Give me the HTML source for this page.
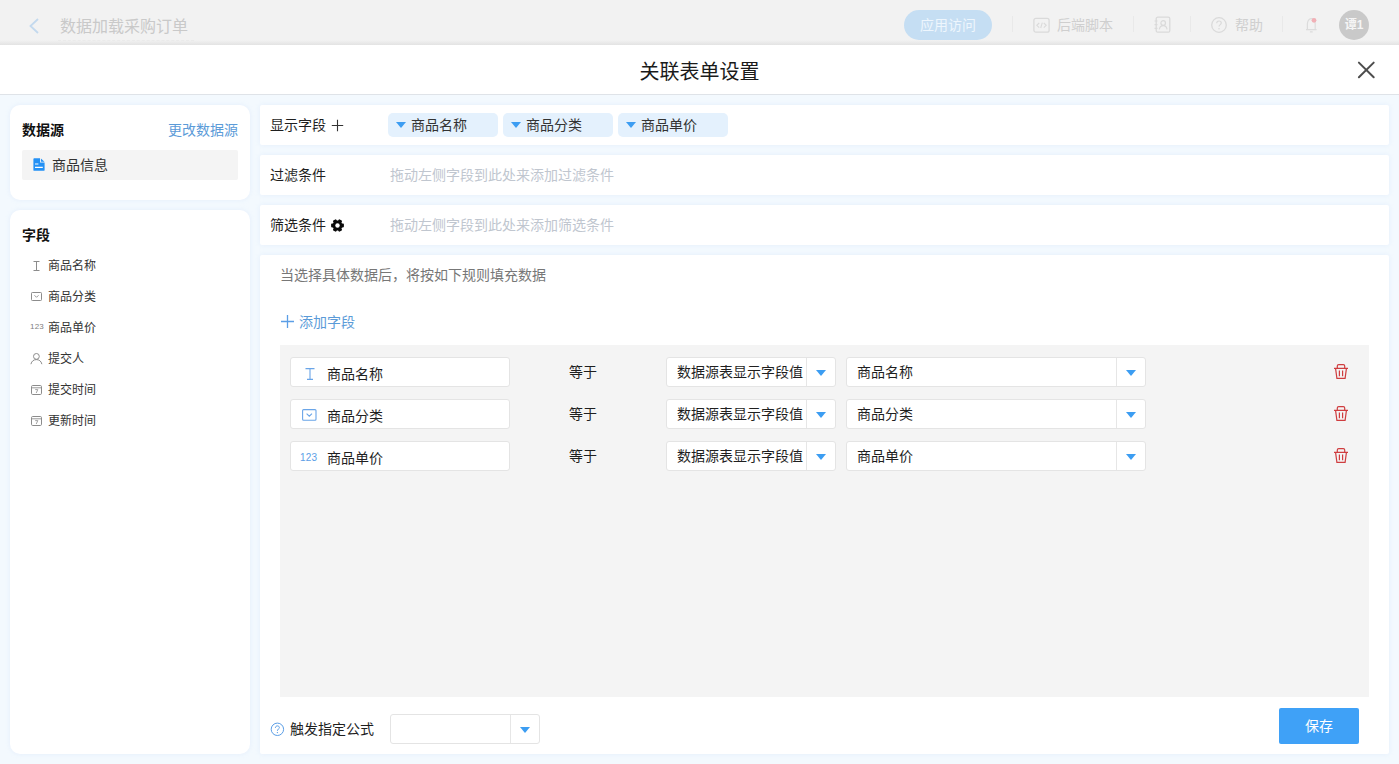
<!DOCTYPE html>
<html lang="zh-CN">
<head>
<meta charset="utf-8">
<title>关联表单设置</title>
<style>
*{box-sizing:border-box;margin:0;padding:0}
html,body{width:1399px;height:764px;overflow:hidden}
body{position:relative;background:#f3f9fe;font-family:"Liberation Sans","Noto Sans CJK SC",sans-serif;font-size:14px;color:#1f1f1f}
.abs{position:absolute}
.topbar{left:0;top:0;width:1399px;height:45px;background:linear-gradient(#f2f2f2 0,#f2f2f2 40px,#e3e3e3 45px)}
.topbar .t{position:absolute;white-space:nowrap}
.topbar .vs{top:16px;width:1px;height:16px;background:#e9e9e9}
.hdr{left:0;top:45px;width:1399px;height:50px;background:#fff;border-bottom:1px solid #dfe3e8}
.hdr .title{position:absolute;left:0;width:1399px;top:13px;text-align:center;font-size:20px;line-height:28px;color:#1a1a1a}
.panel{background:#fff;border-radius:10px;box-shadow:0 0 5px rgba(190,212,243,.28)}
.row{background:#fff;border-radius:2px;left:260px;width:1129px;height:40px;box-shadow:0 0 5px rgba(190,212,243,.28)}
.row .lab{position:absolute;left:10px;top:0;line-height:40px;white-space:nowrap;color:#1f1f1f}
.row .ph{position:absolute;left:130px;top:0;line-height:40px;color:#c0c6cf;white-space:nowrap}
.tag{position:absolute;top:8px;width:110px;height:24px;border-radius:5px;background:#e4f1fd;line-height:24px;padding-left:23px;color:#333;white-space:nowrap}
.tag:before{content:"";position:absolute;left:8px;top:9px;border:5px solid transparent;border-top:6px solid #3c9df2;border-bottom:0}
.fld{position:absolute;left:38px;font-size:12px;line-height:18px;color:#333;white-space:nowrap}
.inp{position:absolute;height:30px;background:#fff;border:1px solid #e4e4e4;border-radius:3px;line-height:28px;white-space:nowrap;color:#1f1f1f}
.caret{position:absolute;width:0;height:0;border:5px solid transparent;border-top:6px solid #3c9df2;border-bottom:0}
.sep{position:absolute;top:0;width:1px;height:28px;background:#e6e6e6}
.eq{position:absolute;left:569px;line-height:20px;color:#1f1f1f}
</style>
</head>
<body>
<!-- top bar (dimmed) -->
<div class="abs topbar">
  <svg class="abs" style="left:26px;top:17px" width="16" height="18" viewBox="0 0 16 18"><path d="M12 2 L4.5 9 L12 16" fill="none" stroke="#c3d9ee" stroke-width="1.8"/></svg>
  <div class="t" style="left:58px;top:15px;font-size:16px;line-height:24px;color:#c9c9c9;padding:0 6px 1px 2px;border-bottom:1px dashed #eaeaea">数据加载采购订单</div>
  <div class="t" style="left:904px;top:10px;width:88px;height:30px;border-radius:15px;background:#c5def3;color:#eef6fd;font-size:14px;line-height:30px;text-align:center">应用访问</div>
  <div class="t vs" style="left:1012px"></div>
  <svg class="abs" style="left:1033px;top:17px" width="17" height="17" viewBox="0 0 17 17"><rect x="0.9" y="1.4" width="15.2" height="13.8" rx="2" fill="none" stroke="#dadada" stroke-width="1.3"/><path d="M6.2 6 L3.8 8.3 L6.2 10.6 M10.8 6 L13.2 8.3 L10.8 10.6 M9.3 5.6 L7.7 11" fill="none" stroke="#dadada" stroke-width="1.1"/></svg>
  <div class="t" style="left:1057px;top:15px;font-size:14px;line-height:20px;color:#cfcfcf">后端脚本</div>
  <div class="t vs" style="left:1133px"></div>
  <svg class="abs" style="left:1153px;top:16px" width="19" height="18" viewBox="0 0 19 18"><rect x="3.2" y="1.2" width="13.6" height="15" rx="1.5" fill="none" stroke="#dadada" stroke-width="1.3"/><path d="M1.5 5 H4.5 M1.5 8.7 H4.5 M1.5 12.4 H4.5" stroke="#dadada" stroke-width="1.2"/><circle cx="10.2" cy="7" r="2.3" fill="none" stroke="#dadada" stroke-width="1.2"/><path d="M6.3 13.4 C6.8 10.6 8.4 9.6 10.2 9.6 C12 9.6 13.6 10.6 14.1 13.4" fill="none" stroke="#dadada" stroke-width="1.2"/></svg>
  <div class="t vs" style="left:1190px"></div>
  <svg class="abs" style="left:1210px;top:16px" width="18" height="18" viewBox="0 0 18 18"><circle cx="9" cy="9" r="7.3" fill="none" stroke="#dadada" stroke-width="1.3"/><path d="M6.7 7.3 C6.7 5.7 7.8 5 9 5 C10.3 5 11.3 5.8 11.3 7 C11.3 8.6 9 8.7 9 10.6" fill="none" stroke="#dadada" stroke-width="1.2"/><circle cx="9" cy="12.7" r="0.8" fill="#dadada"/></svg>
  <div class="t" style="left:1235px;top:15px;font-size:14px;line-height:20px;color:#cfcfcf">帮助</div>
  <div class="t vs" style="left:1282px"></div>
  <svg class="abs" style="left:1303px;top:16px" width="18" height="18" viewBox="0 0 18 18"><path d="M3 13.6 H13.6 M4.4 13.4 V8 C4.4 4.6 6.2 2.6 8.3 2.6 C10.4 2.6 12.2 4.6 12.2 8 V13.4 M6.9 15.8 H9.7" fill="none" stroke="#dcdcdc" stroke-width="1.2"/><circle cx="11" cy="4.3" r="2.4" fill="#f1b0b6"/></svg>
  <div class="t" style="left:1339px;top:10px;width:30px;height:30px;border-radius:15px;background:#c9c9c9;color:#f5f5f5;font-size:12px;font-weight:bold;line-height:30px;text-align:center">谭1</div>
</div>

<!-- modal header -->
<div class="abs hdr">
  <div class="title">关联表单设置</div>
  <svg class="abs" style="left:1356px;top:15px" width="20" height="20" viewBox="0 0 20 20"><path d="M2.9 2.6 L17.7 17.2 M17.7 2.6 L2.9 17.2" fill="none" stroke="#4d4d4d" stroke-width="2" stroke-linecap="round"/></svg>
</div>

<!-- left: data source -->
<div class="abs panel" style="left:10px;top:105px;width:240px;height:95px">
  <div class="abs" style="left:12px;top:15px;font-weight:bold;line-height:20px;color:#111">数据源</div>
  <div class="abs" style="right:12px;top:15px;line-height:20px;color:#5b9bd8">更改数据源</div>
  <div class="abs" style="left:12px;top:45px;width:216px;height:30px;background:#f4f4f4;border-radius:2px">
    <svg class="abs" style="left:11px;top:8px" width="12" height="13" viewBox="0 0 12 13"><path d="M1.2 0.3 H7 V4.6 H11.6 V11.9 Q11.6 12.8 10.7 12.8 H1.2 Q0.4 12.8 0.4 11.9 V1.2 Q0.4 0.3 1.2 0.3 Z M7.9 0.5 L11.5 3.8 H7.9 Z" fill="#2491f5"/><path d="M2 6 H5.4 M2 9.4 H9.8" stroke="#fff" stroke-width="1.1"/></svg><div class="abs" style="left:30px;top:0;line-height:30px;color:#333">商品信息</div>
  </div>
</div>

<!-- left: fields -->
<div class="abs panel" style="left:10px;top:210px;width:240px;height:544px">
  <div class="abs" style="left:12px;top:15px;font-weight:bold;line-height:20px;color:#111">字段</div>
  <svg class="abs" style="left:23px;top:51px" width="7" height="10" viewBox="0 0 7 10"><path d="M0.5 0.5 H6.5 M3.5 0.5 V9.5 M0.5 9.5 H6.5" fill="none" stroke="#8c8c8c" stroke-width="1"/></svg>
  <div class="fld" style="top:47px">商品名称</div>
  <svg class="abs" style="left:21px;top:82px" width="11" height="9" viewBox="0 0 11 9"><rect x="0.5" y="0.5" width="10" height="8" rx="0.8" fill="none" stroke="#8c8c8c"/><path d="M3.5 3.3 L5.5 5.3 L7.5 3.3" fill="none" stroke="#8c8c8c" stroke-width="0.9"/></svg>
  <div class="fld" style="top:78px">商品分类</div>
  <div class="abs" style="left:20px;top:112px;font-size:8px;line-height:10px;letter-spacing:0.2px;color:#808080">123</div>
  <div class="fld" style="top:109px">商品单价</div>
  <svg class="abs" style="left:20px;top:142px" width="13" height="13" viewBox="0 0 13 13"><circle cx="6.4" cy="4.4" r="2.9" fill="none" stroke="#8c8c8c"/><path d="M0.9 12.2 C1.6 9 3.8 7.6 6.4 7.6 C9 7.6 11.2 9 11.9 12.2" fill="none" stroke="#8c8c8c"/></svg>
  <div class="fld" style="top:140px">提交人</div>
  <svg class="abs" style="left:21px;top:175px" width="11" height="10" viewBox="0 0 11 10"><rect x="0.5" y="0.5" width="10" height="9" rx="1.2" fill="none" stroke="#8c8c8c"/><path d="M0.5 2.8 H10.5" stroke="#8c8c8c" stroke-width="0.9"/><path d="M4.2 4.6 H6.8 L5.2 8" fill="none" stroke="#8c8c8c" stroke-width="0.8"/></svg>
  <div class="fld" style="top:171px">提交时间</div>
  <svg class="abs" style="left:21px;top:206px" width="11" height="10" viewBox="0 0 11 10"><rect x="0.5" y="0.5" width="10" height="9" rx="1.2" fill="none" stroke="#8c8c8c"/><path d="M0.5 2.8 H10.5" stroke="#8c8c8c" stroke-width="0.9"/><path d="M4.2 4.6 H6.8 L5.2 8" fill="none" stroke="#8c8c8c" stroke-width="0.8"/></svg>
  <div class="fld" style="top:202px">更新时间</div>
</div>

<!-- right rows -->
<div class="abs row" style="top:105px">
  <div class="lab">显示字段</div>
  <svg class="abs" style="left:71px;top:14px" width="13" height="13" viewBox="0 0 13 13"><path d="M0.8 6.5 H12.2 M6.5 0.8 V12.2" stroke="#333" stroke-width="1.1"/></svg>
  <div class="tag" style="left:128px">商品名称</div>
  <div class="tag" style="left:243px">商品分类</div>
  <div class="tag" style="left:358px">商品单价</div>
</div>
<div class="abs row" style="top:155px">
  <div class="lab">过滤条件</div>
  <div class="ph">拖动左侧字段到此处来添加过滤条件</div>
</div>
<div class="abs row" style="top:205px">
  <div class="lab">筛选条件</div>
  <svg class="abs" style="left:70px;top:13px" width="15" height="15" viewBox="-7.5 -7.5 15 15"><g fill="#0a0a0a" transform="rotate(30)"><circle r="4.9"/><rect x="-1.9" y="-6.4" width="3.8" height="4" rx="0.8" transform="rotate(0)"/><rect x="-1.9" y="-6.4" width="3.8" height="4" rx="0.8" transform="rotate(60)"/><rect x="-1.9" y="-6.4" width="3.8" height="4" rx="0.8" transform="rotate(120)"/><rect x="-1.9" y="-6.4" width="3.8" height="4" rx="0.8" transform="rotate(180)"/><rect x="-1.9" y="-6.4" width="3.8" height="4" rx="0.8" transform="rotate(240)"/><rect x="-1.9" y="-6.4" width="3.8" height="4" rx="0.8" transform="rotate(300)"/></g><circle r="2.2" fill="#fff"/></svg>
  <div class="ph">拖动左侧字段到此处来添加筛选条件</div>
</div>

<!-- right main -->
<div class="abs row" style="top:255px;height:499px">
  <div class="abs" style="left:20px;top:10px;line-height:20px;color:#777">当选择具体数据后，将按如下规则填充数据</div>
  <svg class="abs" style="left:20px;top:59px" width="15" height="15" viewBox="0 0 15 15"><path d="M1 7.5 H14 M7.5 1 V14" stroke="#5b9ee6" stroke-width="1.3"/></svg>
  <div class="abs" style="left:39px;top:57px;line-height:20px;color:#5b9bd8">添加字段</div>
  <div class="abs" style="left:20px;top:90px;width:1089px;height:352px;background:#f4f4f4"></div>
</div>

<!-- rule rows -->
<div class="inp" style="left:290px;top:357px;width:220px"><svg class="abs" style="left:14px;top:10px" width="10" height="12" viewBox="0 0 10 12"><path d="M0.5 0.6 H9.5 M5 0.6 V11.4 M2 11.4 H8" fill="none" stroke="#6aa5e8" stroke-width="1.1"/></svg><span class="abs" style="left:36px;top:2px">商品名称</span></div>
<svg class="abs" style="left:1333px;top:363px" width="16" height="16" viewBox="0 0 16 16"><path d="M1 5.4 H15 M4.3 5 V3 Q4.3 1.6 5.7 1.6 H10.3 Q11.7 1.6 11.7 3 V5 M2.6 5.6 L3.9 15.3 H12.1 L13.4 5.6 M6.4 7.4 V13.2 M9.6 7.4 V13.2" fill="none" stroke="#cf3d3f" stroke-width="1.2"/></svg>
<div class="eq" style="top:362px">等于</div>
<div class="inp" style="left:666px;top:357px;width:170px"><span class="abs" style="left:10px;top:0">数据源表显示字段值</span><div class="sep" style="left:139px"></div><div class="caret" style="left:149px;top:12px"></div></div>
<div class="inp" style="left:846px;top:357px;width:300px"><span class="abs" style="left:10px;top:0">商品名称</span><div class="sep" style="left:269px"></div><div class="caret" style="left:279px;top:12px"></div></div>
<div class="inp" style="left:290px;top:399px;width:220px"><svg class="abs" style="left:11px;top:9px" width="15" height="12" viewBox="0 0 15 12"><rect x="0.6" y="0.6" width="13.4" height="10.6" rx="1" fill="none" stroke="#6aa5e8" stroke-width="1.1"/><path d="M4.6 4.6 L7.3 7.2 L10 4.6" fill="none" stroke="#6aa5e8" stroke-width="1.1"/></svg><span class="abs" style="left:36px;top:2px">商品分类</span></div>
<svg class="abs" style="left:1333px;top:405px" width="16" height="16" viewBox="0 0 16 16"><path d="M1 5.4 H15 M4.3 5 V3 Q4.3 1.6 5.7 1.6 H10.3 Q11.7 1.6 11.7 3 V5 M2.6 5.6 L3.9 15.3 H12.1 L13.4 5.6 M6.4 7.4 V13.2 M9.6 7.4 V13.2" fill="none" stroke="#cf3d3f" stroke-width="1.2"/></svg>
<div class="eq" style="top:404px">等于</div>
<div class="inp" style="left:666px;top:399px;width:170px"><span class="abs" style="left:10px;top:0">数据源表显示字段值</span><div class="sep" style="left:139px"></div><div class="caret" style="left:149px;top:12px"></div></div>
<div class="inp" style="left:846px;top:399px;width:300px"><span class="abs" style="left:10px;top:0">商品分类</span><div class="sep" style="left:269px"></div><div class="caret" style="left:279px;top:12px"></div></div>
<div class="inp" style="left:290px;top:441px;width:220px"><span class="abs" style="left:9px;top:10px;font-size:10px;line-height:12px;letter-spacing:0.2px;color:#5b9ee6">123</span><span class="abs" style="left:36px;top:2px">商品单价</span></div>
<svg class="abs" style="left:1333px;top:447px" width="16" height="16" viewBox="0 0 16 16"><path d="M1 5.4 H15 M4.3 5 V3 Q4.3 1.6 5.7 1.6 H10.3 Q11.7 1.6 11.7 3 V5 M2.6 5.6 L3.9 15.3 H12.1 L13.4 5.6 M6.4 7.4 V13.2 M9.6 7.4 V13.2" fill="none" stroke="#cf3d3f" stroke-width="1.2"/></svg>
<div class="eq" style="top:446px">等于</div>
<div class="inp" style="left:666px;top:441px;width:170px"><span class="abs" style="left:10px;top:0">数据源表显示字段值</span><div class="sep" style="left:139px"></div><div class="caret" style="left:149px;top:12px"></div></div>
<div class="inp" style="left:846px;top:441px;width:300px"><span class="abs" style="left:10px;top:0">商品单价</span><div class="sep" style="left:269px"></div><div class="caret" style="left:279px;top:12px"></div></div>


<!-- footer -->
<svg class="abs" style="left:270px;top:722px" width="15" height="15" viewBox="0 0 15 15"><circle cx="7.4" cy="7.3" r="6.2" fill="none" stroke="#5b9ee6" stroke-width="1"/><path d="M5.4 5.9 C5.4 4.6 6.3 3.9 7.4 3.9 C8.5 3.9 9.4 4.6 9.4 5.7 C9.4 7 7.4 7.1 7.4 8.8" fill="none" stroke="#5b9ee6" stroke-width="1"/><circle cx="7.4" cy="10.6" r="0.7" fill="#5b9ee6"/></svg>
<div class="abs" style="left:290px;top:719px;line-height:20px;color:#1f1f1f">触发指定公式</div>
<div class="inp" style="left:390px;top:714px;width:150px"><div class="sep" style="left:119px"></div><div class="caret" style="left:129px;top:12px"></div></div>
<div class="abs" style="left:1279px;top:708px;width:80px;height:36px;background:#3fa1f7;border-radius:2px;color:#fff;line-height:36px;text-align:center">保存</div>
</body>
</html>
